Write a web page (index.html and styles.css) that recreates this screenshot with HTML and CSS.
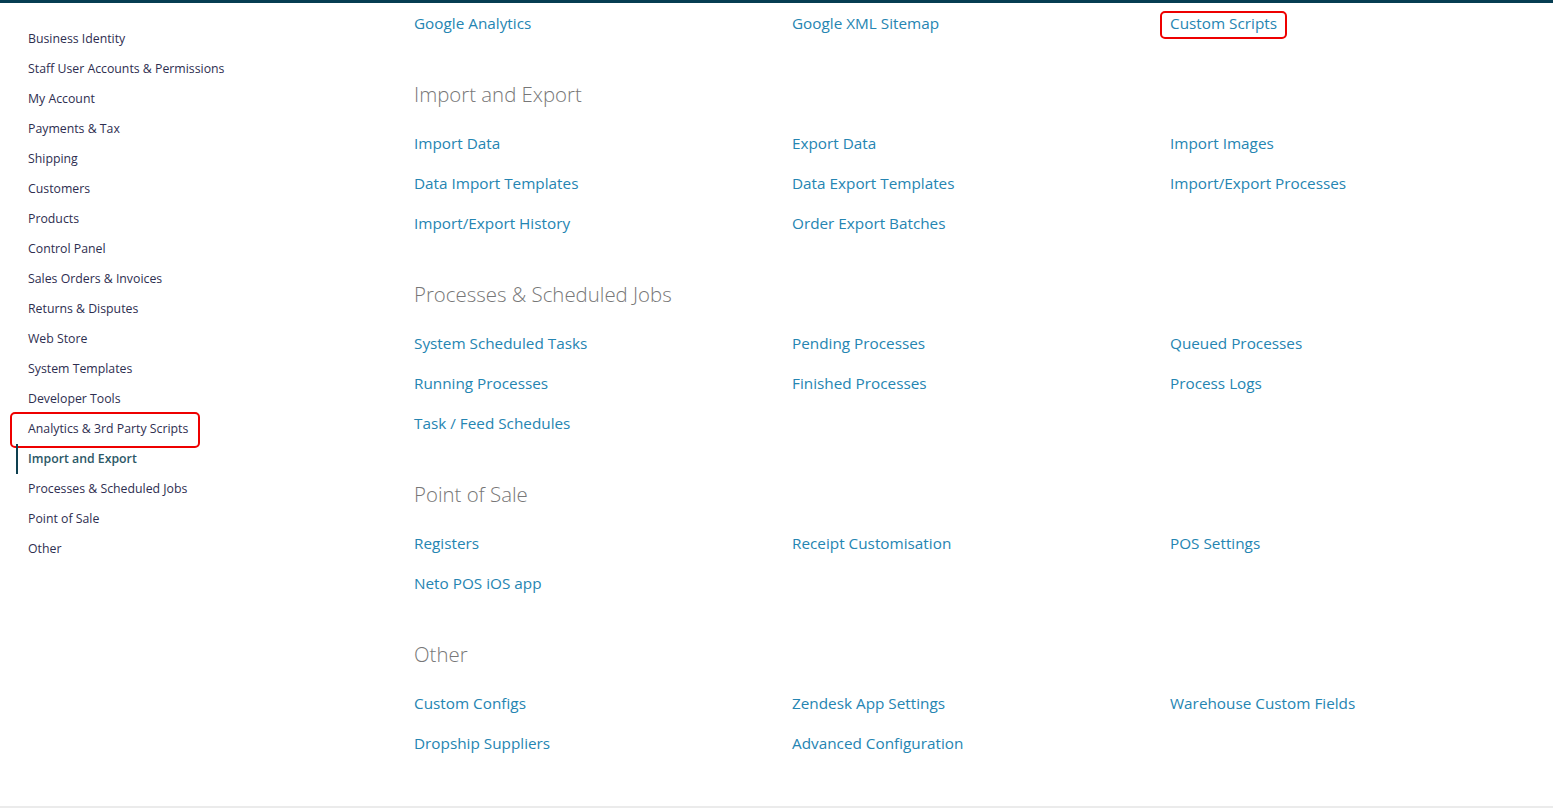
FILE: index.html
```html
<!DOCTYPE html>
<html>
<head>
<meta charset="utf-8">
<link rel="stylesheet" href="styles.css">
</head>
<body>
<div class="topbar"></div>
<div class="page">
  <nav class="sidebar">
    <ul class="side-list">
      <li class="side-item">Business Identity</li>
      <li class="side-item">Staff User Accounts &amp; Permissions</li>
      <li class="side-item">My Account</li>
      <li class="side-item">Payments &amp; Tax</li>
      <li class="side-item">Shipping</li>
      <li class="side-item">Customers</li>
      <li class="side-item">Products</li>
      <li class="side-item">Control Panel</li>
      <li class="side-item">Sales Orders &amp; Invoices</li>
      <li class="side-item">Returns &amp; Disputes</li>
      <li class="side-item">Web Store</li>
      <li class="side-item">System Templates</li>
      <li class="side-item">Developer Tools</li>
      <li class="side-item highlight-side">Analytics &amp; 3rd Party Scripts</li>
      <li class="side-item active">Import and Export</li>
      <li class="side-item">Processes &amp; Scheduled Jobs</li>
      <li class="side-item">Point of Sale</li>
      <li class="side-item">Other</li>
    </ul>
  </nav>
  <main class="main">
    <div class="links">
      <a class="link">Google Analytics</a>
      <a class="link">Google XML Sitemap</a>
      <a class="link"><span class="highlight-link">Custom Scripts</span></a>
    </div>

    <h2 class="heading">Import and Export</h2>
    <div class="links">
      <a class="link">Import Data</a>
      <a class="link">Export Data</a>
      <a class="link">Import Images</a>
      <a class="link">Data Import Templates</a>
      <a class="link">Data Export Templates</a>
      <a class="link">Import/Export Processes</a>
      <a class="link">Import/Export History</a>
      <a class="link">Order Export Batches</a>
    </div>

    <h2 class="heading">Processes &amp; Scheduled Jobs</h2>
    <div class="links">
      <a class="link">System Scheduled Tasks</a>
      <a class="link">Pending Processes</a>
      <a class="link">Queued Processes</a>
      <a class="link">Running Processes</a>
      <a class="link">Finished Processes</a>
      <a class="link">Process Logs</a>
      <a class="link">Task / Feed Schedules</a>
    </div>

    <h2 class="heading">Point of Sale</h2>
    <div class="links">
      <a class="link">Registers</a>
      <a class="link">Receipt Customisation</a>
      <a class="link">POS Settings</a>
      <a class="link">Neto POS iOS app</a>
    </div>

    <h2 class="heading">Other</h2>
    <div class="links">
      <a class="link">Custom Configs</a>
      <a class="link">Zendesk App Settings</a>
      <a class="link">Warehouse Custom Fields</a>
      <a class="link">Dropship Suppliers</a>
      <a class="link">Advanced Configuration</a>
    </div>
  </main>
</div>
</body>
</html>
```
FILE: styles.css
```css
*, *::before, *::after { box-sizing: border-box; }
html, body { margin: 0; padding: 0; background: #fff; }
body {
  font-family: "Open Sans", "Noto Sans", sans-serif;
  height: 810px;
  overflow: hidden;
}
.topbar {
  height: 3px;
  background: #063d52;
}
.page {
  display: flex;
  height: 805px;
  border-bottom: 2px solid #ebebeb;
}
.sidebar {
  width: 414px;
  flex: none;
  padding-top: 21px;
}
.side-list {
  list-style: none;
  margin: 0 0 0 16px;
  padding: 0;
}
.side-item {
  position: relative;
  height: 30px;
  line-height: 30px;
  font-size: 12.3px;
  color: #2e2e50;
  padding-left: 10px;
  border-left: 2px solid transparent;
  white-space: nowrap;
}
.side-item.active {
  border-left-color: #0e4050;
  color: #2c5866;
  font-weight: 600;
}
.highlight-side::after {
  content: "";
  position: absolute;
  left: -8px;
  top: -2px;
  width: 190px;
  height: 36px;
  border: 2px solid #ee0000;
  border-radius: 5px;
}
.main {
  flex: 1;
}
.links {
  display: grid;
  grid-template-columns: 378px 378px 378px;
}
.link {
  display: block;
  height: 40px;
  line-height: 40px;
  font-size: 15.3px;
  color: #2585b2;
  white-space: nowrap;
}
.highlight-link {
  position: relative;
}
.highlight-link::after {
  content: "";
  position: absolute;
  left: -10px;
  top: -2px;
  width: 127px;
  height: 28px;
  border: 2px solid #ee0000;
  border-radius: 5px;
}
.heading {
  margin: 36px 0 14px;
  height: 30px;
  line-height: 30px;
  font-size: 20.4px;
  font-weight: 300;
  color: #777777;
}
```
